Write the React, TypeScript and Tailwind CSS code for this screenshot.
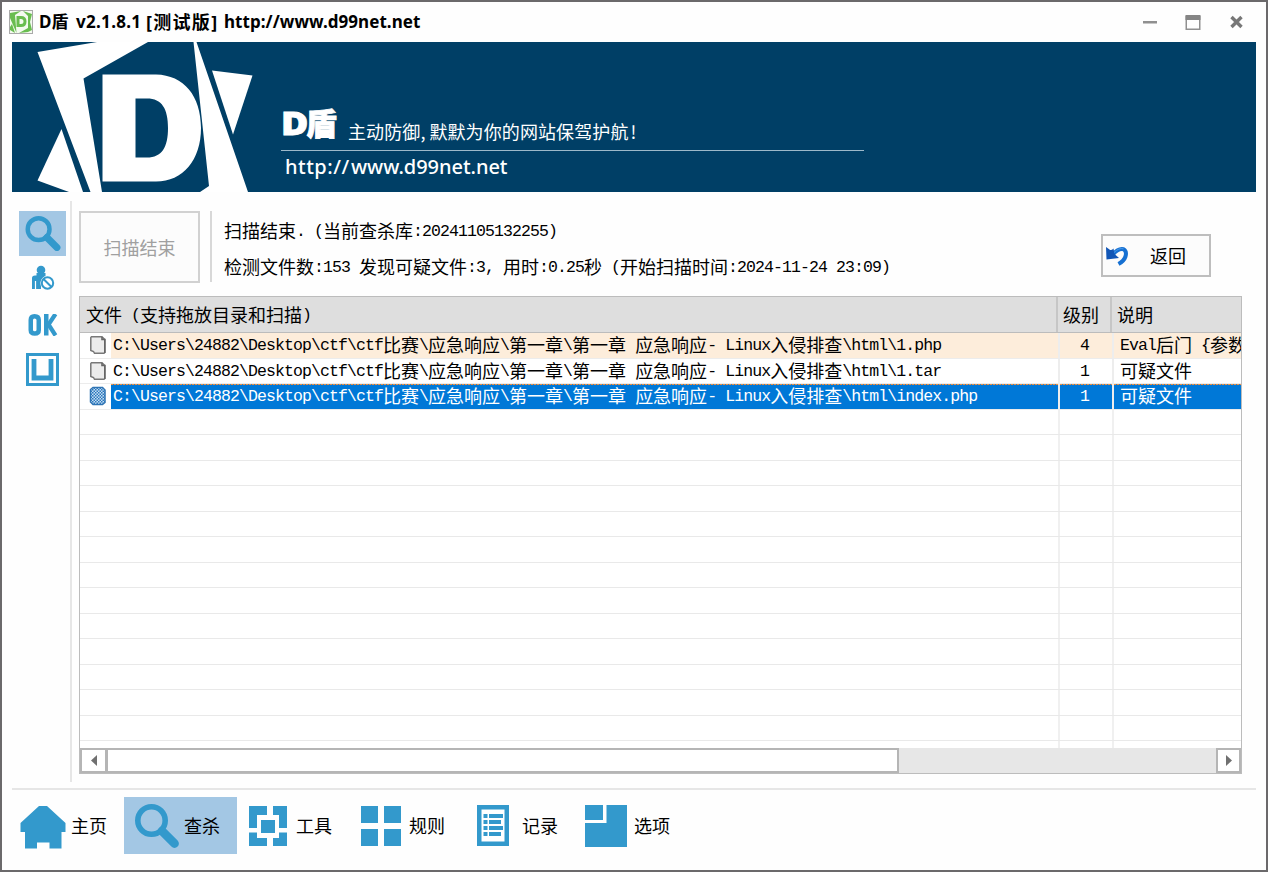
import React from "react";

const BLUE = "#3399cc";

/** Text in a double-width grid: CJK glyphs take 18px, Latin glyphs take 9px. */
function Grid({ children }: { children: string }) {
  const runs = children.match(/[\x20-\x7e]+|[^\x20-\x7e]+/g) ?? [];
  return (
    <span className="inline-flex h-6 items-start whitespace-pre font-['Noto_Sans_CJK_SC',sans-serif] text-[18px] leading-[24px]">
      {runs.map((run, i) =>
        /[\x20-\x7e]/.test(run) ? (
          <span
            key={i}
            className="pt-[2px] font-['Liberation_Mono',monospace] text-[16.5px] leading-[24px] tracking-[-0.9px]"
          >
            {run}
          </span>
        ) : (
          <span key={i}>{run}</span>
        )
      )}
    </span>
  );
}

function Magnifier({ className }: { className: string }) {
  return (
    <svg viewBox="0 0 44 44" className={className}>
      <circle cx="16.500" cy="16.500" r="13.700" fill="none" stroke={BLUE} strokeWidth="5.600" />
      <path d="M27 27 L39.500 39.500" stroke={BLUE} strokeWidth="8.800" strokeLinecap="round" />
    </svg>
  );
}

function AppIcon() {
  return (
    <svg viewBox="0 0 24 24" className="h-6 w-6">
      <rect x="0.500" y="0.500" width="23" height="23" fill="#f4faf0" stroke="#a9a9a9" />
      <path d="M1 3 L12 1 L6 5 L7.500 23 L1 8Z M14 1 L23 4 L21 12 L23 20 L19 22 L10 23 L19 18 L19 6Z M1 17 L3 14 L6 23 L1 20Z" fill="#69bd50" />
      <path d="M7.500 6 H12 Q17.500 6 17.500 11.500 Q17.500 17 12 17 H7.500Z M10.500 9 V14 H12 Q14.500 14 14.500 11.500 Q14.500 9 12 9Z" fill="#69bd50" fillRule="evenodd" />
    </svg>
  );
}

function BannerLogo() {
  return (
    <svg viewBox="12 42 250 150" className="h-[150px] w-[250px] shrink-0">
      <g fill="#fff">
        <path d="M37.500 52 L97 42 H148 L83.500 78.500 L102 192 H90.500Z" />
        <path d="M61.500 129 L83 192 H69 L37.500 180.500Z" />
        <path d="M193.500 42 H196.500 L248 192 H200 L209 186Z" />
        <path d="M212 70.500 L252.500 75.500 L233 134.500Z" />
        <path
          d="M102.500 74.500 H156 C184 75 201 96 201 128 C201 160 183 181.500 156 181.500 H102.500Z M135.500 98.500 V157.500 H147 C162 157.500 168 147 168 128 C168 109 162 98.500 147 98.500Z"
          fillRule="evenodd"
        />
      </g>
    </svg>
  );
}

function UserBlocked() {
  return (
    <svg viewBox="0 0 24 26" className="h-[26px] w-6">
      <circle cx="10" cy="5" r="4.300" fill={BLUE} />
      <path d="M5.500 8 H14.500 V11 L10 16 V24 H1 V13 Q1 10.500 4 10.500 H5.500Z" fill={BLUE} />
      <path d="M4.500 16 V25" stroke="#fff" strokeWidth="1.200" />
      <circle cx="16.500" cy="18" r="7.200" fill="#fff" />
      <circle cx="16.500" cy="18" r="5.700" fill="none" stroke={BLUE} strokeWidth="2" />
      <path d="M12.500 14 L20.500 22" stroke={BLUE} strokeWidth="2" />
    </svg>
  );
}

function OkIcon() {
  return (
    <svg viewBox="0 0 30 22" className="h-[22px] w-[30px]" fill="none" stroke={BLUE} strokeWidth="4.500">
      <path d="M2.750 6 Q2.750 2.250 6.500 2.250 Q10.750 2.250 10.750 6 V16 Q10.750 19.500 6.750 19.500 Q2.750 19.500 2.750 16Z" />
      <path d="M18.250 0 V21.500" />
      <path d="M27.500 0 L20.500 10.500 L27.500 21.500" strokeWidth="4.200" />
    </svg>
  );
}

function BoxIcon() {
  return (
    <svg viewBox="0 0 34 34" className="h-[34px] w-[34px]" fill="none" stroke={BLUE}>
      <rect x="1.500" y="1.500" width="30" height="30" strokeWidth="3" />
      <path d="M8 6 V25 H25 V6" strokeWidth="4.800" />
    </svg>
  );
}

function PageIcon({ selected }: { selected?: boolean }) {
  return (
    <svg viewBox="0 0 18 20" className="h-5 w-[18px]">
      <defs>
        <pattern id="dither" width="3" height="3" patternUnits="userSpaceOnUse">
          <rect width="3" height="3" fill="#c9def0" />
          <rect width="1.500" height="1.500" fill="#2878c0" />
          <rect x="1.500" y="1.500" width="1.500" height="1.500" fill="#2878c0" />
        </pattern>
      </defs>
      {selected ? (
        <path
          d="M4 1.500 H13.500 L16 4 V16.500 L13.500 18.500 H4 L1.500 16 V3.500Z"
          fill="url(#dither)"
          stroke="#2f74b4"
          strokeWidth="1.500"
        />
      ) : (
        <>
          <path
            d="M2.500 1.800 H13 L15.800 4.500 V17.500 L15 18.300 H5.500 L4.500 16.500 L1.800 15.500 V2.500Z"
            fill="#ececec"
            stroke="#787878"
            strokeWidth="1.500"
          />
          <path d="M13 2 V4.500 H15.800 V18" fill="none" stroke="#666" strokeWidth="1.600" />
        </>
      )}
    </svg>
  );
}

function UndoIcon() {
  return (
    <svg viewBox="0 0 24 22" className="h-[22px] w-6">
      <path d="M7 10.500 Q13 3 18.500 4.200 Q22 6 20.500 11.500 Q19 16 13.500 19" fill="none" stroke="#1670d2" strokeWidth="4" />
      <path d="M1 2 L4.500 4.500 Q6 6 8.500 3.500 L9.500 9 L14 13 L1.500 14.500Z" fill="#1156b6" />
      <path d="M9 7.500 Q14 2.500 18.500 3.800" fill="none" stroke="#4a9cec" />
    </svg>
  );
}

function HomeIcon() {
  return (
    <svg viewBox="0 0 46 43" className="h-[43px] w-[46px]">
      <path d="M19 0 H27 L45.500 17 V26 H41.500 V42.500 H29.500 V36.500 H17 V42.500 H5 V26 H0.500 V17Z" fill={BLUE} />
    </svg>
  );
}

function ToolsIcon() {
  return (
    <svg viewBox="0 0 38 40" className="h-10 w-[38px]" fill={BLUE}>
      <path d="M0 0 H18 V9 H8 V22 H0Z M24 0 H38 V22 H30 V9 H24Z M0 26.500 H8 V32 H18 V40 H0Z M30 26.500 H38 V40 H24 V32 H30Z M12 14 H26 V27 H12Z" />
    </svg>
  );
}

function RulesIcon() {
  return (
    <svg viewBox="0 0 40 40" className="h-10 w-10" fill={BLUE}>
      <path d="M0 0 H17 V17 H0Z M23 0 H40 V17 H23Z M0 23 H17 V40 H0Z M23 23 H40 V40 H23Z" />
    </svg>
  );
}

function LogIcon() {
  return (
    <svg viewBox="0 0 32 41" className="h-[41px] w-8">
      <rect x="2.250" y="2.250" width="27.500" height="36.500" fill="#fff" stroke={BLUE} strokeWidth="4.500" />
      <path d="M6.500 9 H10.500 V13 H6.500Z M12 9 H26 V13 H12Z M6.500 15 H10.500 V19 H6.500Z M12 15 H24 V19 H12Z M6.500 21 H10.500 V25 H6.500Z M12 21 H26 V25 H12Z M6.500 27 H10.500 V31 H6.500Z M12 27 H24 V31 H12Z" fill={BLUE} />
    </svg>
  );
}

function OptionsIcon() {
  return (
    <svg viewBox="0 0 42 42" className="h-[42px] w-[42px]" fill={BLUE}>
      <path d="M0 0 H18 V15 H0Z M21.500 0 H42 V42 H0 V18 H21.500Z" />
    </svg>
  );
}

const PREFIX = "C:\\Users\\24882\\Desktop\\ctf\\ctf比赛\\应急响应\\第一章\\第一章 应急响应- Linux入侵排查\\html\\";

const files = [
  { path: PREFIX + "1.php", level: "4", note: "Eval后门 {参数", tone: "bg-[#fdeddb]" },
  { path: PREFIX + "1.tar", level: "1", note: "可疑文件", tone: "bg-white" },
  {
    path: PREFIX + "index.php",
    level: "1",
    note: "可疑文件",
    tone: "text-white bg-[#0078d7] bg-[image:repeating-linear-gradient(90deg,#f09040_0_2px,#3a80b8_2px_3px)] bg-[length:100%_1px] bg-no-repeat",
    selected: true,
  },
];

function TitleBar() {
  return (
    <header className="flex h-10 shrink-0 items-center pl-[7px] pr-[22px]">
      <AppIcon />
      <div className="ml-[6px] flex items-center whitespace-pre font-['Noto_Sans','Noto_Sans_CJK_SC',sans-serif] text-[17px] font-bold leading-6 text-black">
        <span className="w-[37px]">D盾</span>
        <span className="w-[70px] tracking-[0.3px]">v2.1.8.1</span>
        <span className="w-[78px] text-[18px] tracking-[1.3px]">[测试版]</span>
        <span className="tracking-[0.05px]">http://www.d99net.net</span>
      </div>
      <div className="ml-auto flex items-center">
        <svg viewBox="0 0 101 16" className="h-4 w-[101px]" fill="none">
          <path d="M0 8.250 H14" stroke="#909090" strokeWidth="2.500" />
          <path d="M43.250 2 V15.250 H56.750 V2" stroke="#909090" strokeWidth="1.500" />
          <path d="M42.500 3.500 H57.500" stroke="#858585" strokeWidth="5" />
          <path d="M88.500 3 L98.500 13 M98.500 3 L88.500 13" stroke="#777" strokeWidth="3.400" />
        </svg>
      </div>
    </header>
  );
}

function Banner() {
  return (
    <section className="mx-[10px] flex h-[150px] shrink-0 bg-[#003f66] text-white">
      <BannerLogo />
      <div className="ml-[19px] flex w-[583px] flex-col pt-[64px]">
        <div className="flex h-[45px] items-end whitespace-nowrap border-b border-[#9db9ca] pb-[7px]">
          <div className="flex h-[40px] items-center font-['Noto_Sans','Noto_Sans_CJK_SC',sans-serif] text-[31px] font-black leading-[40px] [-webkit-text-stroke:0.8px_white]">
            <span className="inline-block w-[25px] origin-left scale-x-[1.2]">D</span>
            <span>盾</span>
          </div>
          <div className="ml-[11px] font-['Noto_Sans_CJK_SC',sans-serif] text-[18px] leading-[24px] tracking-[0.1px]">
            主动防御<span className="inline-block w-[9px]">,</span>默默为你的网站保驾护航
            <span className="pl-[2px]">!</span>
          </div>
        </div>
        <div className="flex whitespace-pre pl-[4px] pt-[2px] font-['Noto_Sans',sans-serif] text-[20px] font-medium leading-[28px]">
          <span className="w-[66px] tracking-[0.5px]">http://</span>
          <span className="tracking-[-0.05px]">www.d99net.net</span>
        </div>
      </div>
    </section>
  );
}

function SideBar() {
  return (
    <aside className="flex w-[60px] shrink-0 flex-col items-center pl-[5px]">
      <div className="ml-1 mt-[19px] flex h-[45px] w-[47px] items-center justify-center self-start bg-[#a3c7e4]">
        <Magnifier className="h-[35px] w-[36px]" />
      </div>
      <div className="mt-[9px] flex">
        <UserBlocked />
      </div>
      <div className="mt-[23px] flex">
        <OkIcon />
      </div>
      <div className="mt-[17px] flex">
        <BoxIcon />
      </div>
    </aside>
  );
}

function StatusPanel() {
  return (
    <div className="flex h-[72px] shrink-0">
      <button className="flex h-[72px] w-[121px] items-center justify-center border-2 border-[#d1d1d1] bg-[#fcfcfc] text-[#a0a0a0]">
        <Grid>扫描结束</Grid>
      </button>
      <div className="ml-[10px] h-[71px] w-[2px] bg-[#d8d8d8]" />
      <div className="ml-[12px] flex flex-col gap-3 pt-[7px] text-black">
        <Grid>扫描结束. (当前查杀库:20241105132255)</Grid>
        <Grid>检测文件数:153 发现可疑文件:3, 用时:0.25秒 (开始扫描时间:2024-11-24 23:09)</Grid>
      </div>
      <button className="ml-auto mr-[55px] mt-[23px] flex h-[43px] w-[110px] shrink-0 items-center border-2 border-[#bebebe] bg-[#fcfcfc] pl-[2px] text-black">
        <UndoIcon />
        <span className="ml-[21px] flex pb-[2px]">
          <Grid>返回</Grid>
        </span>
      </button>
    </div>
  );
}

function FileTable() {
  return (
    <div className="mt-[13px] flex h-[478px] w-[1163px] flex-col overflow-hidden border border-[#bcbcbc] bg-white">
      <div className="grid h-[36px] shrink-0 grid-cols-[978px_54px_1fr] items-stretch border-b border-[#bcbcbc] bg-[#dedede] text-black">
        <div className="flex items-center border-r-2 border-[#c6c6c6] pb-[2px] pl-[6px]">
          <Grid>文件 (支持拖放目录和扫描)</Grid>
        </div>
        <div className="flex items-center border-r-2 border-[#c6c6c6] pb-[2px] pl-[5px]">
          <Grid>级别</Grid>
        </div>
        <div className="flex items-center pb-[2px] pl-[5px]">
          <Grid>说明</Grid>
        </div>
      </div>
      <div className="h-[415px] shrink-0 overflow-hidden">
        {files.map((f, i) => (
          <div key={i} className="grid h-[25.500px] grid-cols-[980px_54px_minmax(0,1fr)] grid-rows-[24.500px] border-b border-[#ececec] text-black">
            <div className="flex min-w-0 border-r-2 border-[#ededed]">
              <div className="flex w-[31px] shrink-0 items-center pl-[9px]">
                <PageIcon selected={f.selected} />
              </div>
              <div className={`flex grow items-center pb-[2px] pl-[2px] ${f.tone}`}>
                <Grid>{f.path}</Grid>
              </div>
            </div>
            <div className={`flex min-w-0 items-center justify-center border-r-2 border-r-[#ededed] pb-[2px] pr-[3px] ${f.tone}`}>
              <Grid>{f.level}</Grid>
            </div>
            <div className={`flex min-w-0 items-center pb-[2px] pl-[6px] ${f.tone}`}>
              <Grid>{f.note}</Grid>
            </div>
          </div>
        ))}
        {Array.from({ length: 14 }, (_, i) => (
          <div key={i} className="grid h-[25.500px] grid-cols-[980px_54px_1fr] border-b border-[#e9e9e9]">
            <div className="border-r-2 border-[#f0f0f0]" />
            <div className="border-r-2 border-[#f0f0f0]" />
            <div />
          </div>
        ))}
      </div>
      <div className="flex h-[25px] shrink-0 bg-[#e7e7e7]">
        <div className="flex w-[27px] items-center justify-center border-2 border-[#b5b5b5] bg-white">
          <svg viewBox="0 0 6 11" className="h-[11px] w-[6px]">
            <path d="M6 0 V11 L0 5.500Z" fill="#707070" />
          </svg>
        </div>
        <div className="w-[792px] border-2 border-l border-[#b5b5b5] bg-white" />
        <div className="ml-auto flex w-[25px] items-center justify-center border-2 border-[#b5b5b5] bg-white">
          <svg viewBox="0 0 6 11" className="h-[11px] w-[6px]">
            <path d="M0 0 V11 L6 5.500Z" fill="#707070" />
          </svg>
        </div>
      </div>
    </div>
  );
}

function NavItem({
  label,
  icon,
  box,
  slot,
}: {
  label: string;
  icon: React.ReactNode;
  box: string;
  slot: string;
}) {
  return (
    <button className={`flex h-[57px] shrink-0 items-center text-black ${box}`}>
      <span className={`flex shrink-0 ${slot}`}>{icon}</span>
      <span className="flex pb-[2px]">
        <Grid>{label}</Grid>
      </span>
    </button>
  );
}

export default function App() {
  return (
    <main className="flex h-[872px] w-[1268px] flex-col overflow-hidden border-2 border-[#6b696b] bg-[#fefefe]">
      <TitleBar />
      <Banner />
      <div className="flex h-[596px] shrink-0 pl-[8px]">
        <SideBar />
        <div className="mt-[9px] flex h-[581px] grow flex-col border-l-2 border-[#e6e6e6] pl-[7px] pt-[10px]">
          <StatusPanel />
          <FileTable />
        </div>
      </div>
      <nav className="mx-[10px] flex shrink-0 border-t-2 border-[#e6e6e6] pt-[7px]">
        <NavItem label="主页" icon={<HomeIcon />} box="w-[112px] pl-[8px]" slot="w-[51px] pt-[3px]" />
        <NavItem label="查杀" icon={<Magnifier className="h-11 w-11" />} box="w-[113px] pl-[11px] bg-[#a3c7e4]" slot="w-[49px]" />
        <NavItem label="工具" icon={<ToolsIcon />} box="w-[112px] pl-[12px]" slot="w-[47px]" />
        <NavItem label="规则" icon={<RulesIcon />} box="w-[112px] pl-[12px]" slot="w-[48px]" />
        <NavItem label="记录" icon={<LogIcon />} box="w-[112px] pl-[16px]" slot="w-[45px]" />
        <NavItem label="选项" icon={<OptionsIcon />} box="w-[112px] pl-[12px]" slot="w-[49px]" />
      </nav>
    </main>
  );
}
